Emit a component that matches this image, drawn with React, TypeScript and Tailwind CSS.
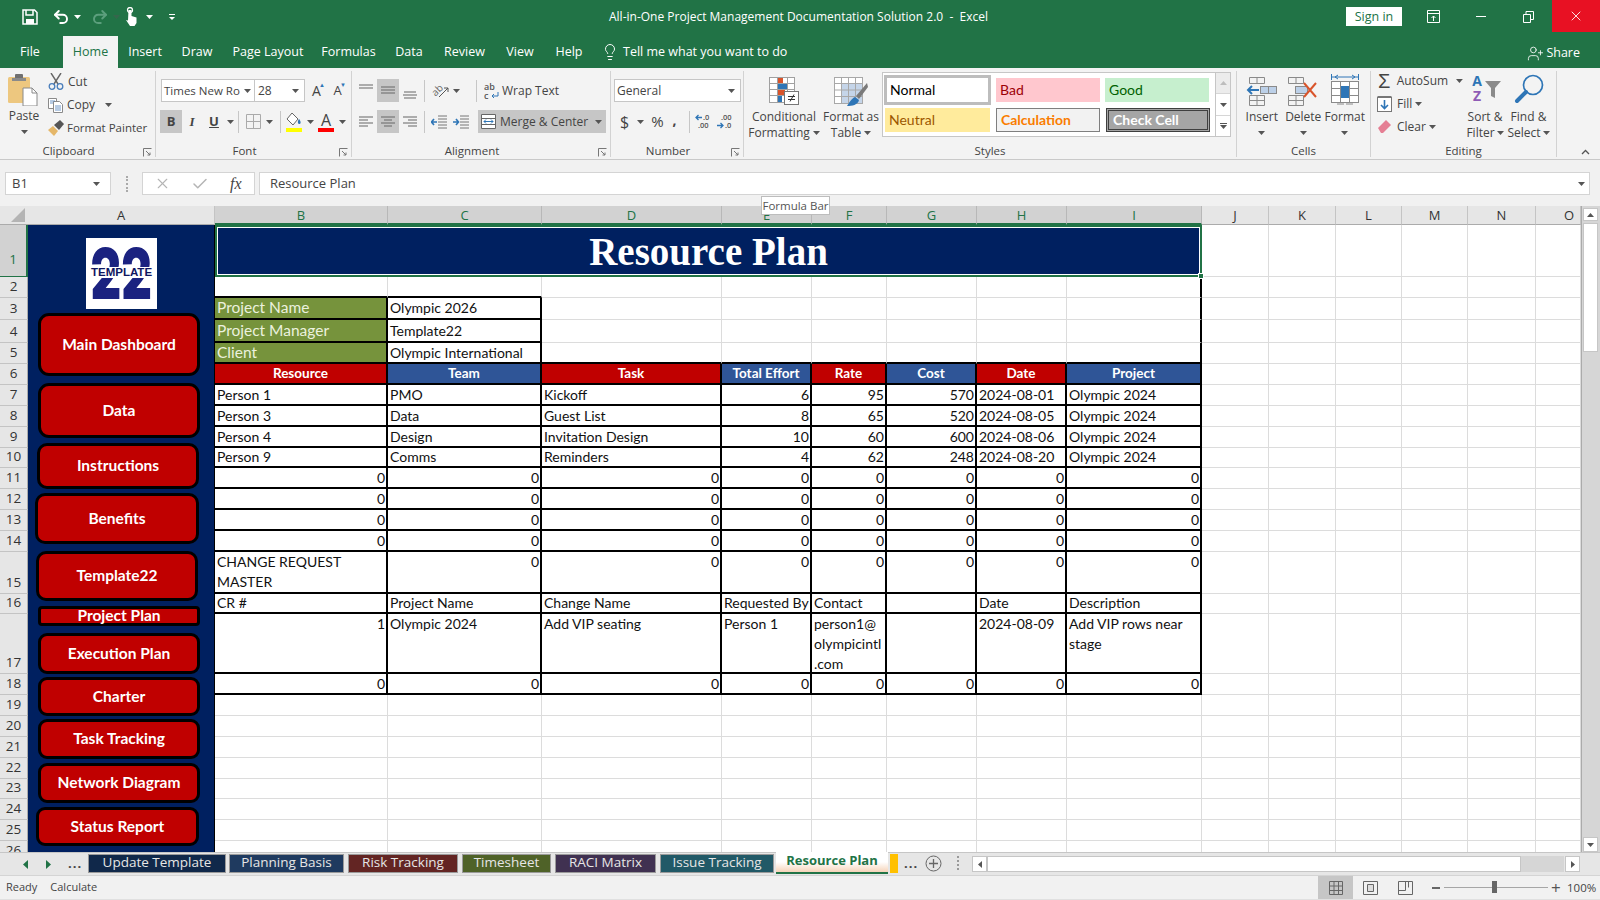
import React from "react";
import { Undo2, Redo2, Lightbulb, UserPlus, Check, X } from "lucide-react";

const Caret = ({ className = "" }: { className?: string }) => (
  <svg width="7" height="4" viewBox="0 0 7 4" className={className}><path d="M0 0h7L3.500 4z" fill="#555" /></svg>
);

const Launcher = () => (
  <svg width="9" height="9" viewBox="0 0 9 9"><path d="M.5 8.500v-8h8M3 3l4 4M7 4.500V7H4.500" fill="none" stroke="#777" strokeWidth="1" /></svg>
);

const Sep = ({ className = "" }: { className?: string }) => <div className={`w-px bg-[#c6c6c6] h-[22px] ${className}`} />;

function Group({ className, label, launcher, children }: { className: string; label: string; launcher?: boolean; children: React.ReactNode }) {
  return (
    <div className={`h-[86px] border-r border-[#d2d2d2] flex flex-col shrink-0 ${className}`}>
      <div className="h-[75px]">{children}</div>
      <div className="flex h-[12px] leading-[12px] text-[11.5px] text-[#444]">
        <div className="flex-1 text-center">{label}</div>
        {launcher && (
          <div className="w-[18px] flex items-center justify-center pl-[2px] pt-[3px]"><Launcher /></div>
        )}
      </div>
    </div>
  );
}

const AlignIcon = ({ kind }: { kind: string }) => {
  const lines: Record<string, string> = {
    top: "M2 3h14M2 6h14",
    mid: "M2 5h14M2 8h14M2 11h14",
    bot: "M3 10h12M2 13h14M3 16h12",
    left: "M2 4h14M2 7h9M2 10h14M2 13h9",
    center: "M2 4h14M5 7h8M2 10h14M5 13h8",
    right: "M2 4h14M7 7h9M2 10h14M7 13h9",
  };
  return <svg width="18" height="18" viewBox="0 0 18 18"><path d={lines[kind]} stroke="#666" strokeWidth="1.1" fill="none" /></svg>;
};

const Paste = () => (
  <svg width="32" height="33" viewBox="0 0 32 33">
    <rect x="1" y="4" width="22" height="26" rx="1.500" fill="#edc77f" />
    <rect x="8" y="1" width="8" height="5" rx="1" fill="#707070" />
    <rect x="5" y="5" width="14" height="3" fill="#8a8a8a" />
    <path d="M16 15h9l5 5v13H16z" fill="#fff" stroke="#8a8a8a" />
    <path d="M25 15v5h5" fill="none" stroke="#8a8a8a" />
  </svg>
);

const ScissorsIc = () => (
  <svg width="16" height="17" viewBox="0 0 16 17" fill="none">
    <path d="M3 0l7 11M13 0L6 11" stroke="#666" strokeWidth="1.400" />
    <circle cx="4" cy="13.500" r="2.800" stroke="#4a7ebb" strokeWidth="1.300" />
    <circle cx="12" cy="13.500" r="2.800" stroke="#4a7ebb" strokeWidth="1.300" />
  </svg>
);

const FmtPainter = () => (
  <svg width="16" height="16" viewBox="0 0 16 16">
    <path d="M0 10l5-4 5 5-4 5z" fill="#e5b769" />
    <path d="M6 5l6-5 4 4-5 6z" fill="#555" />
  </svg>
);

const CopyIc = () => (
  <svg width="15" height="16" viewBox="0 0 15 16" fill="#fff" stroke="#8a8a8a">
    <path d="M.5 1.500h8v10h-8z" /><path d="M5.500 4.500h6l3 3v8h-9z" />
    <path d="M2 4h5M2 6h3M7 9h6M7 11h6M7 13h6" strokeWidth=".8" stroke="#4a7ebb" />
  </svg>
);

const CondFmt = () => (
  <svg width="30" height="28" viewBox="0 0 30 28">
    <rect x=".5" y=".5" width="25" height="25" fill="#fff" stroke="#a0a0a0" />
    <rect x="9" y="1" width="5" height="6" fill="#d9542b" />
    <rect x="9" y="7" width="10" height="6" fill="#2e75b6" />
    <rect x="9" y="13" width="7" height="6" fill="#d9542b" />
    <rect x="9" y="19" width="4" height="6" fill="#2e75b6" />
    <path d="M.5 6.500h25M.5 12.500h25M.5 18.500h25M8.500.5v25M18.500.5v25" stroke="#a0a0a0" fill="none" />
    <rect x="15.500" y="14.500" width="14" height="13" fill="#fff" stroke="#777" />
    <path d="M19 19.500h7M19 22.500h7M25 17.500l-4 7" stroke="#333" fill="none" />
  </svg>
);

const FmtTable = () => (
  <svg width="34" height="30" viewBox="0 0 34 30">
    <rect x=".5" y=".5" width="28" height="26" fill="#fff" stroke="#a8a8a8" />
    <rect x="7" y="7" width="21" height="19" fill="#c5d5e9" />
    <path d="M.5 6.500h28M.5 13h28M.5 19.500h28M7.500.5v26M14.500.5v26M21.500.5v26" stroke="#a8a8a8" fill="none" />
    <path d="M33 6l-11 13 3 3 9-12z" fill="#7a7a7a" />
    <path d="M21 20c-3 1-6 6-8 9 5 0 11-1 12-6z" fill="#2e75b6" />
  </svg>
);

const InsertIc = () => (
  <svg width="32" height="31" viewBox="0 0 32 31" fill="none" stroke="#8a8a8a">
    <path d="M3.500 1.500h15v6h-15zM11 1.500v6M3.500 19.500h15v10h-15zM3.500 24.500h15M11 19.500v10" />
    <rect x="14.500" y="10.500" width="16" height="7" fill="#bcd0e8" stroke="#8a8a8a" />
    <path d="M22.500 10.500v7" />
    <path d="M13 14H2M6 10l-4 4 4 4" stroke="#2e75b6" strokeWidth="2" />
  </svg>
);

const DeleteIc = () => (
  <svg width="32" height="31" viewBox="0 0 32 31" fill="none" stroke="#8a8a8a">
    <path d="M1.500 1.500h15v6h-15zM9 1.500v6M1.500 19.500h15v10h-15zM1.500 24.500h15M9 19.500v10" />
    <rect x="8.500" y="10.500" width="12" height="7" fill="#bcd0e8" />
    <path d="M17 7l12 14M29 7L17 21" stroke="#d9542b" strokeWidth="2" />
  </svg>
);

const FormatIc = () => (
  <svg width="30" height="33" viewBox="0 0 30 33" fill="none" stroke="#8a8a8a">
    <path d="M2 3h26M1.500 0v6M28.500 0v6M5 3l3-2M5 3l3 2M25 3l-3-2M25 3l-3 2" stroke="#2e75b6" />
    <rect x="1.500" y="7.500" width="27" height="21" fill="#fff" />
    <path d="M1.500 14.500h27M1.500 21.500h27M10.500 7.500v21M19.500 7.500v21" />
    <rect x="11" y="12" width="8" height="12" fill="#2e75b6" stroke="none" />
    <path d="M7 30h7M16 30h7" />
  </svg>
);

const SortIc = () => (
  <svg width="34" height="29" viewBox="0 0 34 29">
    <text x="9" y="12" fontSize="14" fontWeight="700" textAnchor="middle" fill="#2e75b6" fontFamily="Open Sans">A</text>
    <text x="9" y="27" fontSize="14" fontWeight="700" textAnchor="middle" fill="#8e5bb5" fontFamily="Open Sans">Z</text>
    <path d="M17 7h16l-6 7v10l-4-2v-8z" fill="#8a8a8a" />
  </svg>
);

const FindIc = () => (
  <svg width="32" height="30" viewBox="0 0 32 30" fill="none" stroke="#2e75b6">
    <circle cx="20" cy="11" r="9.500" strokeWidth="1.700" />
    <path d="M13 18L4 27" strokeWidth="4" strokeLinecap="round" />
  </svg>
);

function StyleCell({ className, children }: { className: string; children: React.ReactNode }) {
  return <div className={`h-[24px] w-[104px] flex items-center pl-[4px] text-[14px] shrink-0 ${className}`}>{children}</div>;
}

function Titlebar() {
  return (
    <div className="h-[68px] bg-[#217346] text-white shrink-0 flex flex-col">
      <div className="h-[36px] flex items-start">
        <div className="flex items-center h-[33px] pl-[22px] w-[600px]">
          <svg width="16" height="16" viewBox="0 0 16 16" fill="none" stroke="#fff" strokeWidth="1.500">
            <path d="M1 1h11.500L15 3.500V15H1z" /><path d="M4 1v5h7V1" /><rect x="4" y="10" width="8" height="5" fill="#fff" stroke="none" />
          </svg>
          <Undo2 size={18} strokeWidth={2.6} className="ml-[14px]" />
          <Caret className="ml-[4px] brightness-[4]" />
          <Redo2 size={18} strokeWidth={2.6} className="ml-[10px] text-[#5c9f7d]" />
          <Caret className="ml-[4px] opacity-40" />
          <svg width="14" height="19" viewBox="0 0 14 19" className="ml-[5px]" fill="#fff"><circle cx="5" cy="3" r="2.500" fill="none" stroke="#fff" strokeWidth="1.300" /><path d="M3.500 3h3v6l5 1.500V16l-2 3H5l-4-6 2 .5z" /></svg>
          <Caret className="ml-[7px] brightness-[4]" />
          <svg width="8" height="8" viewBox="0 0 8 8" className="ml-[15px]" fill="#fff"><rect x="1" y="1" width="6" height="1" /><path d="M1 4h6L4 7z" /></svg>
        </div>
        <div className="text-[12px] leading-[34px] whitespace-pre pl-[9px]">All-in-One Project Management Documentation Solution 2.0  -  Excel</div>
        <div className="flex-1" />
        <div className="mt-[7px] w-[56px] h-[19px] bg-white text-[#217346] text-[12.5px] leading-[19px] text-center">Sign in</div>
        <div className="ml-[6px] w-[50px] flex justify-center pt-[10px]">
          <svg width="13" height="13" viewBox="0 0 13 13" fill="none" stroke="#fff"><path d="M.5.500h12v12H.5zM.5 3.500h12M6.500 11V6M4.500 8l2-2 2 2" /></svg>
        </div>
        <div className="w-[46px] flex justify-center pt-[16px]"><div className="w-[10px] h-px bg-white" /></div>
        <div className="w-[48px] flex justify-center pt-[11px]">
          <svg width="11" height="12" viewBox="0 0 11 12" fill="none" stroke="#fff"><path d="M.5 3.500h7v8h-7zM3 3.500v-3h7.500v8h-3" /></svg>
        </div>
        <div className="w-[48px] h-[32px] bg-[#e81123] flex items-center justify-center"><X size={16} strokeWidth={1.3} /></div>
      </div>
      <div className="h-[32px] flex items-start text-[12.5px] leading-[32px]">
        <div className="w-[63px] text-center pr-[3px]">File</div>
        <div className="w-[55px] h-[32px] bg-[#f3f3f3] text-[#217346] text-center">Home</div>
        <div className="w-[54px] text-center">Insert</div>
        <div className="w-[50px] text-center">Draw</div>
        <div className="w-[92px] text-center">Page Layout</div>
        <div className="w-[69px] text-center">Formulas</div>
        <div className="w-[52px] text-center">Data</div>
        <div className="w-[59px] text-center">Review</div>
        <div className="w-[52px] text-center">View</div>
        <div className="w-[46px] text-center">Help</div>
        <div className="w-[20px] flex justify-center pt-[7px] ml-[8px]"><Lightbulb size={18} strokeWidth={1.3} /></div>
        <div className="pl-[3px]">Tell me what you want to do</div>
        <div className="flex-1" />
        <div className="flex items-center pr-[20px] h-[34px] gap-[2px]"><UserPlus size={17} strokeWidth={1.2} />Share</div>
      </div>
    </div>
  );
}

function Ribbon() {
  return (
    <div className="h-[92px] bg-[#f3f3f3] border-b border-[#c9c9c9] shrink-0 flex items-start pt-[3px] text-[12px] text-[#444] leading-none">
      <Group className="w-[156px]" label="Clipboard" launcher>
        <div className="flex">
          <div className="w-[48px] flex flex-col items-center pt-[2px]">
            <div className="-ml-[2px]"><Paste /></div>
            <div className="mt-[4px]">Paste</div>
            <Caret className="mt-[8px]" />
          </div>
          <div className="flex flex-col -mt-[1px]">
            <div className="h-[23px] flex items-center gap-[4px]"><ScissorsIc /><span>Cut</span></div>
            <div className="h-[23px] flex items-center gap-[4px]"><CopyIc /><span>Copy</span><Caret className="ml-[6px]" /></div>
            <div className="h-[23px] flex items-center gap-[3px] text-[11.5px]"><FmtPainter /><span>Format Painter</span></div>
          </div>
        </div>
      </Group>
      <Group className="w-[196px]" label="Font" launcher>
        <div className="pl-[5px] pt-[8px] flex items-center">
          <div className="w-[94px] h-[23px] bg-white border border-[#c6c6c6] flex items-center pl-[2px] justify-between pr-[3px]"><span className="text-[11.5px] whitespace-nowrap">Times New Ro</span><Caret /></div>
          <div className="w-[50px] h-[23px] bg-white border border-[#c6c6c6] border-l-0 flex items-center pl-[3px] justify-between pr-[5px]"><span>28</span><Caret /></div>
          <div className="w-[21px] ml-[1px] text-center text-[14px] relative">A<span className="absolute -top-[2px] right-[2px] text-[#2e75b6] text-[6px]">▲</span></div>
          <div className="w-[21px] text-center text-[13px] relative">A<span className="absolute -top-[2px] right-[2px] text-[#2e75b6] text-[6px]">▼</span></div>
        </div>
        <div className="pl-[4px] pt-[8px] flex items-center">
          <div className="w-[22px] h-[23px] bg-[#c6c6c6] flex items-center justify-center font-bold text-[13px]">B</div>
          <div className="w-[20px] text-center italic font-bold text-[13px] font-['Liberation_Serif']">I</div>
          <div className="w-[22px] ml-[1px] text-center underline font-bold text-[13px]">U</div>
          <Caret className="ml-[2px]" />
          <Sep className="ml-[4px]" />
          <svg width="15" height="15" viewBox="0 0 15 15" className="ml-[7px]" fill="none" stroke="#aaa"><path d="M.5.500h14v14H.5zM.5 7.500h14M7.500.5v14" /></svg>
          <Caret className="ml-[5px]" />
          <Sep className="ml-[7px]" />
          <svg width="18" height="20" viewBox="0 0 18 20" className="ml-[4px]"><path d="M7 1l6 6-5 6-6-6z" fill="#fff" stroke="#666" /><path d="M14 7c2 2 2 5 .5 5S12 10 14 7z" fill="#2e75b6" /><rect x="1" y="16" width="16" height="4" fill="#ffff00" /></svg>
          <Caret className="ml-[4px]" />
          <svg width="18" height="20" viewBox="0 0 18 20" className="ml-[3px]"><text x="9" y="14" textAnchor="middle" fontSize="16" fill="#444" fontFamily="Open Sans">A</text><rect x="1" y="16" width="16" height="4" fill="#ff0000" /></svg>
          <Caret className="ml-[4px]" />
        </div>
      </Group>
      <Group className="w-[259px]" label="Alignment" launcher>
        <div className="pl-[3px] pt-[8px] flex items-center">
          <div className="w-[22px] h-[23px] flex items-center justify-center"><AlignIcon kind="top" /></div>
          <div className="w-[22px] h-[23px] bg-[#c6c6c6] flex items-center justify-center"><AlignIcon kind="mid" /></div>
          <div className="w-[22px] h-[23px] flex items-center justify-center"><AlignIcon kind="bot" /></div>
          <Sep className="ml-[3px]" />
          <svg width="20" height="18" viewBox="0 0 20 18" className="ml-[6px]"><text x="1" y="12" fontSize="10" fill="#666" transform="rotate(-45 6 9)" fontFamily="Open Sans">ab</text><path d="M8 15l9-9M17 6h-4M17 6v4" stroke="#555" fill="none" /></svg>
          <Caret className="ml-[2px]" />
          <Sep className="ml-[16px]" />
          <svg width="16" height="18" viewBox="0 0 16 18" className="ml-[7px]"><text x="0" y="8" fontSize="9" fontWeight="600" fill="#555" fontFamily="Open Sans">ab</text><text x="0" y="17" fontSize="9" fontWeight="600" fill="#555" fontFamily="Open Sans">c</text><path d="M14 10v4H8M10 12l-2 2 2 2" stroke="#2e75b6" fill="none" /></svg>
          <span className="ml-[2px]">Wrap Text</span>
        </div>
        <div className="pl-[3px] pt-[8px] flex items-center">
          <div className="w-[22px] h-[23px] flex items-center justify-center"><AlignIcon kind="left" /></div>
          <div className="w-[22px] h-[23px] bg-[#c6c6c6] flex items-center justify-center"><AlignIcon kind="center" /></div>
          <div className="w-[22px] h-[23px] flex items-center justify-center"><AlignIcon kind="right" /></div>
          <Sep className="ml-[3px]" />
          <div className="w-[22px] h-[23px] ml-[3px] flex items-center justify-center">
            <svg width="16" height="14" viewBox="0 0 16 14" fill="none" stroke="#777"><path d="M7 1h9M7 4h9M7 7h9M7 10h9M7 13h9" /><path d="M6 7H1M3 4L0.500 7 3 10" stroke="#2e75b6" strokeWidth="1.600" /></svg>
          </div>
          <div className="w-[21px] h-[23px] flex items-center justify-center">
            <svg width="16" height="14" viewBox="0 0 16 14" fill="none" stroke="#777"><path d="M7 1h9M7 4h9M7 7h9M7 10h9M7 13h9" /><path d="M0 7h5M3 4l2.500 3L3 10" stroke="#2e75b6" strokeWidth="1.600" /></svg>
          </div>
          <div className="w-[128px] h-[23px] ml-[7px] bg-[#c6c6c6] flex items-center pl-[3px]">
            <svg width="15" height="15" viewBox="0 0 15 15" fill="#fff" stroke="#666"><path d="M.5.500h14v14H.5zM.5 4.500h14M.5 10.500h14" /><path d="M3 7.500h9M5 5.500l-2 2 2 2M10 5.500l2 2-2 2" stroke="#2e75b6" fill="none" /></svg>
            <span className="ml-[4px]">Merge &amp; Center</span>
            <Caret className="ml-[7px]" />
          </div>
        </div>
      </Group>
      <Group className="w-[133px]" label="Number" launcher>
        <div className="pl-[3px] pt-[8px]">
          <div className="w-[127px] h-[23px] bg-white border border-[#c6c6c6] flex items-center pl-[2px] justify-between pr-[5px]"><span>General</span><Caret /></div>
        </div>
        <div className="pl-[9px] pt-[8px] flex items-center h-[31px]">
          <span className="text-[16px]">$</span>
          <Caret className="ml-[8px]" />
          <span className="ml-[7px] text-[15px]">%</span>
          <span className="ml-[9px] font-bold text-[14px] -mt-[4px]">,</span>
          <Sep className="ml-[12px]" />
          <svg width="17" height="17" viewBox="0 0 17 17" className="ml-[5px]" fontFamily="Open Sans" fontWeight="600">
            <text x="8" y="7" fontSize="7.500" fill="#555">.0</text><text x="3" y="15" fontSize="7.500" fill="#555">.00</text><path d="M1 4.500h6M3.500 2L1 4.500 3.500 7" stroke="#2e75b6" strokeWidth="1.300" fill="none" />
          </svg>
          <svg width="17" height="17" viewBox="0 0 17 17" className="ml-[5px]" fontFamily="Open Sans" fontWeight="600">
            <text x="4" y="7" fontSize="7.500" fill="#555">.00</text><text x="8" y="15" fontSize="7.500" fill="#555">.0</text><path d="M0 12.500h6M3.500 10L6 12.500 3.500 15" stroke="#2e75b6" strokeWidth="1.300" fill="none" />
          </svg>
        </div>
      </Group>
      <Group className="w-[493px]" label="Styles">
        <div className="flex">
          <div className="w-[80px] flex flex-col items-center pt-[6px] leading-[16px]">
            <div className="h-[30px]"><CondFmt /></div>
            <div className="mt-[2px] whitespace-nowrap">Conditional</div>
            <div className="flex items-center gap-[3px] whitespace-nowrap">Formatting<Caret /></div>
          </div>
          <div className="w-[54px] flex flex-col items-center pt-[6px] leading-[16px]">
            <div className="h-[30px]"><FmtTable /></div>
            <div className="mt-[2px] whitespace-nowrap">Format as</div>
            <div className="flex items-center gap-[3px] whitespace-nowrap">Table<Caret /></div>
          </div>
          <div className="ml-[4px] mt-px w-[349px] h-[65px] bg-white border border-[#c6c6c6] flex font-['Lato']">
            <div className="w-[333px] pl-[1px] flex flex-col gap-[2px]">
              <div className="flex gap-[2px] items-center mt-[2px]">
                <div className="w-[107px] h-[30px] border-[3px] border-[#bdbdbd] bg-white text-black flex items-center pl-[3px] text-[14px] shrink-0">Normal</div>
                <StyleCell className="bg-[#ffc7ce] text-[#9c0006] ml-[3px]">Bad</StyleCell>
                <StyleCell className="bg-[#c6efce] text-[#006100] ml-[3px]">Good</StyleCell>
              </div>
              <div className="flex items-center ml-[1px] gap-[6px] mt-px">
                <div className="w-[105px] h-[24px] bg-[#ffeb9c] text-[#9c5700] flex items-center pl-[4px] text-[14px] shrink-0">Neutral</div>
                <StyleCell className="bg-[#f2f2f2] border border-[#7f7f7f] text-[#fa7d00] font-bold">Calculation</StyleCell>
                <StyleCell className="bg-[#a5a5a5] border-[3px] border-double border-[#3f3f3f] text-white font-bold">Check Cell</StyleCell>
              </div>
            </div>
            <div className="w-[15px] border-l border-[#c6c6c6] flex flex-col">
              <div className="h-[21px] bg-[#ececec] border-b border-[#d6d6d6] flex items-center justify-center"><Caret className="rotate-180 opacity-30" /></div>
              <div className="h-[22px] border-b border-[#d6d6d6] flex items-center justify-center"><Caret /></div>
              <div className="h-[20px] flex flex-col items-center justify-center gap-[1px]"><div className="w-[7px] h-px bg-[#555]" /><Caret /></div>
            </div>
          </div>
        </div>
      </Group>
      <Group className="w-[134px]" label="Cells">
        <div className="flex pl-[4px]">
          {[
            ["Insert", <InsertIc key="i" />],
            ["Delete", <DeleteIc key="d" />],
            ["Format", <FormatIc key="f" />],
          ].map(([t, ic], i) => (
            <div key={i} className="w-[41.500px] flex flex-col items-center pt-[3px]">
              <div className="h-[33px] flex items-end">{ic}</div>
              <div className="mt-[4px]">{t}</div>
              <Caret className="mt-[8px]" />
            </div>
          ))}
        </div>
      </Group>
      <Group className="w-[186px]" label="Editing">
        <div className="flex">
          <div className="w-[92px] pl-[6px] flex flex-col -mt-[1px]">
            <div className="h-[22px] flex items-center"><div className="w-[20px] text-left pl-[1px] text-[20px] leading-none font-['Liberation_Sans'] text-[#444]">Σ</div>AutoSum<Caret className="ml-[8px]" /></div>
            <div className="h-[23px] flex items-center">
              <div className="w-[20px] flex justify-start">
                <svg width="15" height="16" viewBox="0 0 15 16" fill="#fff" stroke="#777"><rect x=".5" y="1.500" width="14" height="14" /><path d="M.5.500h14" strokeWidth="2" /><path d="M7.500 4v8M4 9l3.500 3.500L11 9" stroke="#2e75b6" strokeWidth="1.600" fill="none" /></svg>
              </div>Fill<Caret className="ml-[3px]" />
            </div>
            <div className="h-[23px] flex items-center">
              <div className="w-[20px] flex justify-start">
                <svg width="15" height="15" viewBox="0 0 15 15"><path d="M1 9l8-8 5 5-8 8H4z" fill="#e57f94" /></svg>
              </div>Clear<Caret className="ml-[3px]" />
            </div>
          </div>
          <div className="w-[44px] flex flex-col items-center pt-[3px] leading-[16px]">
            <div className="h-[31px]"><SortIc /></div>
            <div className="mt-[4px] whitespace-nowrap">Sort &amp;</div>
            <div className="flex items-center gap-[2px] whitespace-nowrap">Filter<Caret /></div>
          </div>
          <div className="w-[43px] flex flex-col items-center pt-[3px] leading-[16px]">
            <div className="h-[31px]"><FindIc /></div>
            <div className="mt-[4px] whitespace-nowrap">Find &amp;</div>
            <div className="flex items-center gap-[2px] whitespace-nowrap">Select<Caret /></div>
          </div>
        </div>
      </Group>
      <div className="flex-1 h-[86px] flex justify-end items-end pr-[10px] pb-[2px]">
        <svg width="9" height="6" viewBox="0 0 9 6" fill="none" stroke="#555" strokeWidth="1.300"><path d="M1 5l3.500-3.500L8 5" /></svg>
      </div>
    </div>
  );
}

function FormulaBar() {
  return (
    <div className="h-[46px] bg-[#f1f1f1] shrink-0 flex items-start pt-[12px] pl-[5px] pr-[10px] text-[13px] text-[#444]">
      <div className="w-[106px] h-[23px] bg-white border border-[#d4d4d4] flex items-center justify-between pl-[6px] pr-[10px]"><span>B1</span><Caret /></div>
      <div className="w-[31px] flex justify-center items-center h-[23px]"><div className="w-[2px] h-[16px] border-l-2 border-dotted border-[#aaa]" /></div>
      <div className="w-[113px] h-[23px] bg-white border border-[#d4d4d4] flex items-center pl-[11px]">
        <X size={17} strokeWidth={1.6} className="text-[#b5b5b5]" />
        <Check size={18} strokeWidth={2} className="text-[#b5b5b5] ml-[20px]" />
        <span className="ml-[21px] italic font-['Liberation_Serif'] text-[16px]">fx</span>
      </div>
      <div className="flex-1 ml-[4px] h-[23px] bg-white border border-[#d4d4d4] flex items-center justify-between pl-[10px] pr-[4px]"><span>Resource Plan</span><Caret /></div>
    </div>
  );
}

const ACT = "bg-[#d2d2d2] text-[#217346] border-b-2 border-[#217346] border-r border-r-[#b8b8b8]";
const INA = "bg-[#e6e6e6] text-[#333] border-b border-[#ababab] border-r border-r-[#c4c4c4]";

function ColHeaders() {
  return (
    <div className="h-[19px] flex text-[13px] leading-[18px] shrink-0 text-center font-['Open_Sans']">
      <div className="w-[28px] bg-[#e6e6e6] border-b border-[#ababab] flex items-end justify-end pr-[3px] pb-[2px]">
        <svg width="14" height="14" viewBox="0 0 14 14"><path d="M14 0v14H0z" fill="#b4b4b4" /></svg>
      </div>
      <div className={`w-[187px] ${INA}`}>A</div>
      <div className={`w-[173px] ${ACT}`}>B</div>
      <div className={`w-[154px] ${ACT}`}>C</div>
      <div className={`w-[180px] ${ACT}`}>D</div>
      <div className={`w-[90px] ${ACT}`}>E</div>
      <div className={`w-[75px] ${ACT}`}>F</div>
      <div className={`w-[90px] ${ACT}`}>G</div>
      <div className={`w-[90px] ${ACT}`}>H</div>
      <div className={`w-[135px] ${ACT}`}>I</div>
      <div className={`w-[67px] ${INA}`}>J</div>
      <div className={`w-[67px] ${INA}`}>K</div>
      <div className={`w-[66px] ${INA}`}>L</div>
      <div className={`w-[66px] ${INA}`}>M</div>
      <div className={`w-[68px] ${INA}`}>N</div>
      <div className={`w-[45px] text-left pl-[28px] ${INA}`}>O</div>
    </div>
  );
}

const ROW_H = ["h-[52px]", "h-[21px]", "h-[22px]", "h-[23px]", "h-[21px]", "h-[21px]", "h-[21px]", "h-[21px]", "h-[21px]", "h-[20px]", "h-[21px]", "h-[21px]", "h-[21px]", "h-[21px]", "h-[42px]", "h-[20px]", "h-[60px]", "h-[21px]", "h-[21px]", "h-[21px]", "h-[21px]", "h-[21px]", "h-[20px]", "h-[21px]", "h-[21px]", "h-[21px]"];

function RowHeaders() {
  return (
    <div className="w-[28px] shrink-0 flex flex-col font-['Open_Sans'] text-[13.5px] text-[#333]">
      {ROW_H.map((h, i) => (
        <div key={i} className={`${h} shrink-0 flex items-end justify-center border-b ${i === 0 ? "pb-[7px] bg-[#d2d2d2] text-[#217346] border-b-[#217346] border-r-2 border-r-[#217346]" : "pb-[1px] bg-[#e6e6e6] border-[#c4c4c4] border-r border-r-[#ababab]"}`}>
          {i + 1}
        </div>
      ))}
    </div>
  );
}

const BTN = "border-[3px] border-black bg-[#c00000] text-white font-bold flex items-center justify-center text-[15.5px] shrink-0";

function SideNav() {
  return (
    <div className="w-[187px] shrink-0 bg-[#002060] border-r border-black flex flex-col font-['Lato']">
      <div className="mt-[13px] ml-[58px] w-[71px] h-[71px] bg-white shrink-0 relative overflow-hidden flex items-center justify-center">
        <span className="text-[#1b2280] font-black font-['Inter'] text-[70px] leading-none scale-x-[0.68] whitespace-nowrap">22</span>
        <span className="absolute left-0 right-0 top-[29px] h-[11px] bg-white text-[#101660] font-['Liberation_Sans'] font-bold text-[11.5px] leading-[11px] text-center">TEMPLATE</span>
      </div>
      <div className={`${BTN} rounded-[11px] mt-[4px] ml-[10px] w-[162px] h-[63px]`}>Main Dashboard</div>
      <div className={`${BTN} rounded-[11px] mt-[7px] ml-[10px] w-[162px] h-[55px]`}>Data</div>
      <div className={`${BTN} rounded-[10px] mt-[5px] ml-[9px] w-[162px] h-[46px]`}>Instructions</div>
      <div className={`${BTN} rounded-[10px] mt-[4px] ml-[7px] w-[164px] h-[51px]`}>Benefits</div>
      <div className={`${BTN} rounded-[10px] mt-[7px] ml-[8px] w-[162px] h-[50px]`}>Template22</div>
      <div className={`${BTN} rounded-[4px] mt-[5px] ml-[10px] w-[162px] h-[20px]`}>Project Plan</div>
      <div className={`${BTN} rounded-[9px] mt-[7px] ml-[10px] w-[162px] h-[41px]`}>Execution Plan</div>
      <div className={`${BTN} rounded-[9px] mt-[3px] ml-[10px] w-[162px] h-[39px]`}>Charter</div>
      <div className={`${BTN} rounded-[9px] mt-[3px] ml-[10px] w-[162px] h-[40px]`}>Task Tracking</div>
      <div className={`${BTN} rounded-[9px] mt-[4px] ml-[10px] w-[162px] h-[40px]`}>Network Diagram</div>
      <div className={`${BTN} rounded-[9px] mt-[4px] ml-[8px] w-[163px] h-[39px]`}>Status Report</div>
    </div>
  );
}

const GL = "border-r border-b border-[#dcdcdc]";
const TB = "border-r-2 border-b-2 border-black";
const CELL = "overflow-hidden text-[14px] leading-[20px] text-[#111]";

type V = string | number;

function Cell({ v, tb = true, top = false, wrap = false }: { v?: V; tb?: boolean; top?: boolean; wrap?: boolean }) {
  const num = typeof v === "number";
  return (
    <div className={`${CELL} ${tb ? TB : GL} flex ${top ? "items-start" : "items-center"} ${num ? "justify-end pr-[1px]" : "pl-[2px]"}`}>
      <span className={wrap ? "" : "whitespace-nowrap"}>{v}</span>
    </div>
  );
}

const Blank = () => <div className={GL} />;
const Tail = () => (
  <>
    <Blank /><Blank /><Blank /><Blank /><Blank /><Blank />
  </>
);

const Head = ({ t, red }: { t: string; red?: boolean }) => (
  <div className={`${red ? "bg-[#c00000]" : "bg-[#2f5597]"} ${TB} text-white font-bold text-[13.5px] flex items-center justify-center`}>{t}</div>
);

const Label = ({ t }: { t: string }) => (
  <div className="bg-[#76933c] border-r-2 border-b-2 border-black text-[#ebf1de] text-[15.5px] flex items-center pl-[2px] whitespace-nowrap">{t}</div>
);

const DATA: V[][] = [
  ["Person 1", "PMO", "Kickoff", 6, 95, 570, "2024-08-01", "Olympic 2024"],
  ["Person 3", "Data", "Guest List", 8, 65, 520, "2024-08-05", "Olympic 2024"],
  ["Person 4", "Design", "Invitation Design", 10, 60, 600, "2024-08-06", "Olympic 2024"],
  ["Person 9", "Comms", "Reminders", 4, 62, 248, "2024-08-20", "Olympic 2024"],
];

const Zeros = () => (
  <>
    {[0, 1, 2, 3, 4, 5, 6, 7].map((i) => <Cell key={i} v={0} />)}
    <Tail />
  </>
);

function Sheet() {
  return (
    <div className="flex-1 overflow-hidden grid grid-cols-[173px_154px_180px_90px_75px_90px_90px_135px_67px_67px_66px_66px_68px_45px] grid-rows-[52px_21px_22px_23px_21px_21px_21px_21px_21px_20px_21px_21px_21px_21px_42px_20px_60px_21px_21px_21px_21px_21px_20px_21px_21px_21px] bg-white font-['Lato']">
      <div className="col-span-8 bg-[#002060] border-2 border-[#217346] shadow-[inset_0_0_0_1px_#fff] relative flex items-center justify-center font-['Liberation_Serif'] font-bold text-white text-[39px] pt-[3px]">
        Resource Plan
        <div className="absolute -right-[4px] -bottom-[4px] w-[6px] h-[6px] bg-[#217346] border border-white" />
      </div>
      <Tail />
      {/* row 2 */}
      <div className="border-b-2 border-r border-b-black border-r-[#dcdcdc]" />
      <div className="border-b-2 border-r border-b-black border-r-[#dcdcdc]" />
      <Blank /><Blank /><Blank /><Blank /><Blank />
      <div className="border-r-2 border-r-black border-b border-b-[#dcdcdc]" />
      <Tail />
      {/* rows 3-5 */}
      {[["Project Name", "Olympic 2026"], ["Project Manager", "Template22"], ["Client", "Olympic International"]].map(([a, b], i) => (
        <React.Fragment key={a}>
          <Label t={a} />
          <Cell v={b} />
          <div className={i === 2 ? "border-b-2 border-black border-r border-r-[#dcdcdc]" : GL} />
          <div className={i === 2 ? "border-b-2 border-black border-r border-r-[#dcdcdc]" : GL} />
          <div className={i === 2 ? "border-b-2 border-black border-r border-r-[#dcdcdc]" : GL} />
          <div className={i === 2 ? "border-b-2 border-black border-r border-r-[#dcdcdc]" : GL} />
          <div className={i === 2 ? "border-b-2 border-black border-r border-r-[#dcdcdc]" : GL} />
          <div className={i === 2 ? TB : "border-r-2 border-r-black border-b border-b-[#dcdcdc]"} />
          <Tail />
        </React.Fragment>
      ))}
      {/* row 6 */}
      <Head t="Resource" red /><Head t="Team" /><Head t="Task" red /><Head t="Total Effort" /><Head t="Rate" red /><Head t="Cost" /><Head t="Date" red /><Head t="Project" />
      <Tail />
      {/* rows 7-10 */}
      {DATA.map((r, i) => (
        <React.Fragment key={i}>
          {r.map((v, j) => <Cell key={j} v={v} />)}
          <Tail />
        </React.Fragment>
      ))}
      <Zeros /><Zeros /><Zeros /><Zeros />
      {/* row 15 */}
      <Cell v="CHANGE REQUEST MASTER" top wrap />
      {[0, 1, 2, 3, 4, 5, 6].map((i) => <Cell key={i} v={0} top />)}
      <Tail />
      {/* row 16 */}
      <Cell v="CR #" /><Cell v="Project Name" /><Cell v="Change Name" /><Cell v="Requested By" /><Cell v="Contact" /><Cell /><Cell v="Date" /><Cell v="Description" />
      <Tail />
      {/* row 17 */}
      <Cell v={1} top /><Cell v="Olympic 2024" top /><Cell v="Add VIP seating" top /><Cell v="Person 1" top />
      <div className={`${CELL} ${TB} pl-[2px]`}>person1@<br />olympicintl<br />.com</div>
      <Cell top /><Cell v="2024-08-09" top /><Cell v="Add VIP rows near stage" top wrap />
      <Tail />
      <Zeros />
      {Array.from({ length: 8 }).map((_, i) => (
        <React.Fragment key={i}>
          <Blank /><Blank /><Blank /><Blank /><Blank /><Blank /><Blank /><Blank />
          <Tail />
        </React.Fragment>
      ))}
    </div>
  );
}

function VScroll() {
  return (
    <div className="w-[19px] shrink-0 bg-[#d6d6d6] flex flex-col items-center pt-[2px] pr-[2px] border-l border-[#ababab]">
      <div className="w-[15px] h-[13px] bg-white border border-[#c6c6c6] flex items-center justify-center"><Caret className="rotate-180" /></div>
      <div className="w-[15px] h-[129px] bg-white mt-[2px] border border-[#c6c6c6]" />
      <div className="flex-1" />
      <div className="w-[15px] h-[15px] bg-white border border-[#c6c6c6] flex items-center justify-center"><Caret /></div>
    </div>
  );
}

const TAB = "h-[19px] flex items-center justify-center text-[13.5px] text-[#e6e6e6] leading-[14px] pb-[4px] shrink-0 border border-[#9a9a9a]";

function SheetTabs() {
  return (
    <div className="h-[23px] bg-[#e6e6e6] border-t border-[#c6c6c6] shrink-0 flex items-start font-['Open_Sans'] relative">
      <div className="w-[88px] h-[22px] flex items-center text-[#217346]">
        <svg width="6" height="9" viewBox="0 0 6 9" className="ml-[23px]"><path d="M5 0v9L0 4.500z" fill="#217346" /></svg>
        <svg width="6" height="9" viewBox="0 0 6 9" className="ml-[17px]"><path d="M0 0v9l5-4.500z" fill="#217346" /></svg>
        <span className="ml-[16px] text-[#444] text-[13px] font-bold tracking-[1px]">...</span>
      </div>
      <div className={`${TAB} mt-[1px] w-[138px] bg-[#10284a]`}>Update Template</div>
      <div className={`${TAB} mt-[1px] ml-[3px] w-[115px] bg-[#1f3a5f]`}>Planning Basis</div>
      <div className={`${TAB} mt-[1px] ml-[4px] w-[110px] bg-[#632523]`}>Risk Tracking</div>
      <div className={`${TAB} mt-[1px] ml-[4px] w-[89px] bg-[#4f6228]`}>Timesheet</div>
      <div className={`${TAB} mt-[1px] ml-[4px] w-[101px] bg-[#403151]`}>RACI Matrix</div>
      <div className={`${TAB} mt-[1px] ml-[4px] w-[114px] bg-[#215967]`}>Issue Tracking</div>
      <div className="ml-[2px] w-[112px] h-[22px] -mt-px bg-gradient-to-b from-white via-white to-[#f5d3b8] border-b-2 border-[#217346] text-[#217346] font-bold text-[13px] flex items-center justify-center pb-[3px] shrink-0">Resource Plan</div>
      <div className="ml-[2px] mt-[1px] w-[8px] h-[19px] bg-[#ffc000] shrink-0" />
      <span className="ml-[6px] text-[#444] text-[13px] font-bold leading-[20px] tracking-[1px]">...</span>
      <svg width="17" height="17" viewBox="0 0 17 17" className="ml-[7px] mt-[2px]" fill="none" stroke="#666"><circle cx="8.500" cy="8.500" r="7.500" /><path d="M8.500 4v9M4 8.500h9" strokeWidth="1.300" /></svg>
      <div className="ml-[15px] mt-[3px] w-[2px] h-[14px] border-l-2 border-dotted border-[#999]" />
      <div className="ml-[13px] mt-[3px] w-[15px] h-[16px] bg-white border border-[#c6c6c6] flex items-center justify-center shrink-0">
        <svg width="4" height="7" viewBox="0 0 4 7"><path d="M4 0v7L0 3.500z" fill="#555" /></svg>
      </div>
      <div className="flex-1 flex mt-[3px] h-[16px] bg-[#d6d6d6]">
        <div className="w-[534px] bg-white border border-[#c6c6c6]" />
      </div>
      <div className="ml-[1px] mt-[3px] w-[15px] h-[16px] bg-white border border-[#c6c6c6] flex items-center justify-center shrink-0">
        <svg width="4" height="7" viewBox="0 0 4 7"><path d="M0 0v7l4-3.500z" fill="#555" /></svg>
      </div>
      <div className="w-[20px] shrink-0" />
    </div>
  );
}

function StatusBar() {
  return (
    <div className="flex-1 bg-[#f1f1f1] border-t border-[#d4d4d4] border-b-2 border-b-[#e0e0e0] flex items-center text-[11px] text-[#444] pl-[6px]">
      <span>Ready</span>
      <span className="ml-[13px]">Calculate</span>
      <div className="flex-1" />
      <div className="w-[35px] h-[23px] bg-[#c6c6c6] flex items-center justify-center">
        <svg width="14" height="14" viewBox="0 0 14 14" fill="none" stroke="#666"><path d="M.5.500h13v13H.5zM.5 5h13M.5 9.500h13M5 .5v13M9.500.5v13" /></svg>
      </div>
      <div className="w-[35px] flex justify-center">
        <svg width="15" height="14" viewBox="0 0 15 14" fill="none" stroke="#666"><path d="M.5.500h14v13H.5z" /><path d="M4.500 3.500h6v7h-6z" fill="#ddd" /></svg>
      </div>
      <div className="w-[35px] flex justify-center">
        <svg width="15" height="14" viewBox="0 0 15 14" fill="none" stroke="#666"><path d="M.5.500h14v13H.5zM.5 9.500h7v-9M10.500.5v6" /></svg>
      </div>
      <div className="ml-[9px] w-[8px] h-[2px] bg-[#666]" />
      <div className="ml-[4px] w-[104px] h-px bg-[#a6a6a6] relative">
        <div className="absolute left-[48px] -top-[6px] w-[5px] h-[12px] bg-[#666]" />
      </div>
      <span className="ml-[3px] text-[17px] text-[#555] leading-none w-[10px]">+</span>
      <span className="ml-[6px] w-[33px] text-[11.5px]">100%</span>
    </div>
  );
}

export default function App() {
  return (
    <div className="relative w-[1600px] h-[900px] overflow-hidden flex flex-col bg-white font-['Open_Sans']">
      <Titlebar />
      <Ribbon />
      <FormulaBar />
      <div className="h-[646px] flex shrink-0 bg-[#e6e6e6]">
        <div className="flex-1 flex flex-col overflow-hidden">
          <ColHeaders />
          <div className="flex-1 flex overflow-hidden">
            <RowHeaders />
            <SideNav />
            <Sheet />
          </div>
        </div>
        <VScroll />
      </div>
      <SheetTabs />
      <StatusBar />
      <div className="absolute left-[761px] top-[196px] w-[69px] h-[19px] bg-white border border-[#bdbdbd] text-[11.5px] leading-[17px] text-[#555] text-center whitespace-nowrap">Formula Bar</div>
    </div>
  );
}
